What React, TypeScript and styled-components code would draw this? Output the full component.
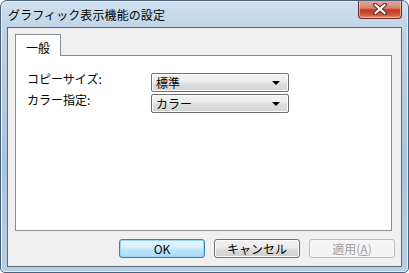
import React from "react";
import styled, { createGlobalStyle } from "styled-components";

const Global = createGlobalStyle`
  html, body { margin: 0; padding: 0; background: #ffffff; }
  * { box-sizing: border-box; }
`;

const font = `"MS UI Gothic", "Noto Sans CJK JP", "DejaVu Sans", sans-serif`;

const Window = styled.div`
  width: 409px;
  height: 273px;
  border: 1px solid #4a637c;
  border-radius: 7px 7px 5px 5px;
  background: linear-gradient(180deg, #cfe0ee 0%, #bcd3e6 12%, #a9c5de 60%, #b6cfe4 100%);
  box-shadow: inset 0 0 0 1px #e4eef7;
  display: flex;
  flex-direction: column;
  overflow: hidden;
  font-family: ${font};
`;

const TitleBar = styled.div`
  height: 26px;
  display: flex;
  align-items: flex-start;
  justify-content: space-between;
  padding-left: 7px;
  padding-right: 6px;
`;

const Title = styled.div`
  font-size: 12px;
  line-height: 12px;
  margin-top: 8px;
  color: #000;
  letter-spacing: 0.1px;
`;

const CloseButton = styled.div`
  width: 44px;
  height: 19px;
  margin-top: -1px;
  border: 1px solid #6b2a22;
  border-top: none;
  border-radius: 0 0 4px 4px;
  background: linear-gradient(180deg, #e8b0a0 0%, #d88270 45%, #c0391f 55%, #d25a3c 85%, #e59c7c 100%);
  box-shadow: inset 0 0 0 1px rgba(255, 210, 195, 0.6);
  display: flex;
  align-items: center;
  justify-content: center;
`;

const Client = styled.div`
  margin: 0 6px;
  height: 240px;
  border: 1px solid #5d6b78;
  background: #f0f0f0;
  padding: 6px 9px 0 7px;
  display: flex;
  flex-direction: column;
`;

const TabStrip = styled.div`
  display: flex;
  height: 21px;
  position: relative;
  z-index: 1;
`;

const Tab = styled.div`
  width: 46px;
  height: 22px;
  background: #ffffff;
  border: 1px solid #898c95;
  border-bottom: none;
  font-size: 12px;
  padding: 4px 0 0 10px;
  color: #000;
`;

const Panel = styled.div`
  height: 176px;
  border: 1px solid #898c95;
  background: #ffffff;
  padding: 17px 0 0 11px;
  display: grid;
  grid-template-columns: 124px 138px;
  grid-auto-rows: 21px;
  row-gap: 0px;
  align-content: start;
`;

const Label = styled.div`
  font-size: 12px;
  line-height: 12px;
  padding-top: 0px;
  color: #000;
  display: flex;
  align-items: flex-start;
`;

const Select = styled.div`
  height: 19px;
  border: 1px solid #707070;
  border-radius: 2px;
  background: linear-gradient(180deg, #f3f3f3 0%, #ececec 45%, #dedede 55%, #d4d4d4 100%);
  box-shadow: inset 0 0 0 1px #fbfbfb;
  display: flex;
  align-items: center;
  justify-content: space-between;
  padding: 0 8px 0 4px;
  font-size: 12px;
  color: #000;
`;

const Arrow = styled.div`
  width: 0;
  height: 0;
  border-left: 4px solid transparent;
  border-right: 4px solid transparent;
  border-top: 4px solid #000;
  margin-top: 1px;
`;

const ButtonRow = styled.div`
  display: flex;
  justify-content: flex-end;
  gap: 9px;
  margin-top: 8px;
  padding-right: 0px;
  margin-right: -3px;
`;

const Button = styled.div<{ $variant?: "default" | "normal" | "disabled" }>`
  width: 86px;
  height: 19px;
  border-radius: 3px;
  font-size: 12px;
  display: flex;
  align-items: center;
  justify-content: center;
  border: 1px solid
    ${(p) => (p.$variant === "default" ? "#3c7fb1" : p.$variant === "disabled" ? "#b8bcbf" : "#707070")};
  background: ${(p) =>
    p.$variant === "default"
      ? "linear-gradient(180deg, #eaf6fd 0%, #d9f0fc 45%, #bee6fd 55%, #a7d9f5 100%)"
      : p.$variant === "disabled"
      ? "#f4f4f4"
      : "linear-gradient(180deg, #f2f2f2 0%, #ebebeb 45%, #dddddd 55%, #cfcfcf 100%)"};
  box-shadow: inset 0 0 0 1px
    ${(p) => (p.$variant === "default" ? "#9cd4f5" : p.$variant === "disabled" ? "#f8f8f8" : "#fcfcfc")};
  color: ${(p) => (p.$variant === "disabled" ? "#a0a0a0" : "#000")};
`;

const U = styled.span`
  text-decoration: underline;
`;

export default function App() {
  return (
    <>
      <Global />
      <Window>
        <TitleBar>
          <Title>グラフィック表示機能の設定</Title>
          <CloseButton>
            <svg width="14" height="12" viewBox="0 0 14 12">
              <path
                d="M2 1.5 L12 10.5 M12 1.5 L2 10.5"
                stroke="#5a2a22"
                strokeWidth="4"
                strokeLinecap="square"
              />
              <path
                d="M2.5 2 L11.5 10 M11.5 2 L2.5 10"
                stroke="#ffffff"
                strokeWidth="2.2"
                strokeLinecap="square"
              />
            </svg>
          </CloseButton>
        </TitleBar>
        <Client>
          <TabStrip>
            <Tab>一般</Tab>
          </TabStrip>
          <Panel>
            <Label>コピーサイズ:</Label>
            <Select>
              <span>標準</span>
              <Arrow />
            </Select>
            <Label>カラー指定:</Label>
            <Select>
              <span>カラー</span>
              <Arrow />
            </Select>
          </Panel>
          <ButtonRow>
            <Button $variant="default">OK</Button>
            <Button $variant="normal">キャンセル</Button>
            <Button $variant="disabled">
              適用(<U>A</U>)
            </Button>
          </ButtonRow>
        </Client>
      </Window>
    </>
  );
}
